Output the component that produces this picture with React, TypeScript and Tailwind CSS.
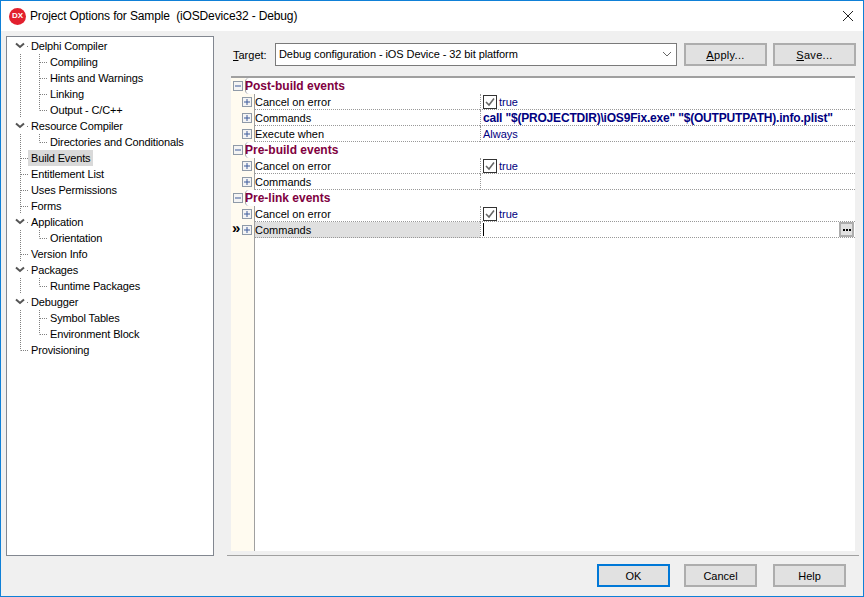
import React from 'react';

const uiFont = "font-['Liberation_Sans',sans-serif] text-[11px] leading-4 text-black";

type TreeItem = {
  label: string;
  level: 0 | 1;
  expanded?: boolean;
  selected?: boolean;
  last?: boolean;
  trunkEnd?: boolean;
};

const treeItems: TreeItem[] = [
  { label: 'Delphi Compiler', level: 0, expanded: true },
  { label: 'Compiling', level: 1 },
  { label: 'Hints and Warnings', level: 1 },
  { label: 'Linking', level: 1 },
  { label: 'Output - C/C++', level: 1, last: true },
  { label: 'Resource Compiler', level: 0, expanded: true },
  { label: 'Directories and Conditionals', level: 1, last: true },
  { label: 'Build Events', level: 0, selected: true },
  { label: 'Entitlement List', level: 0 },
  { label: 'Uses Permissions', level: 0 },
  { label: 'Forms', level: 0 },
  { label: 'Application', level: 0, expanded: true },
  { label: 'Orientation', level: 1, last: true },
  { label: 'Version Info', level: 0 },
  { label: 'Packages', level: 0, expanded: true },
  { label: 'Runtime Packages', level: 1, last: true },
  { label: 'Debugger', level: 0, expanded: true },
  { label: 'Symbol Tables', level: 1 },
  { label: 'Environment Block', level: 1, last: true },
  { label: 'Provisioning', level: 0, trunkEnd: true },
];

const TreeConnector: React.FC<{ item: TreeItem }> = ({ item }) => {
  const dots = { stroke: '#808080', strokeDasharray: '1 1', strokeWidth: 1, fill: 'none' };
  if (item.level === 1) {
    return (
      <svg width="40" height="16" className="shrink-0">
        <path d="M13.5 0V16" {...dots} />
        <path d={item.last ? 'M32.5 0V8.5' : 'M32.5 0V16'} {...dots} />
        <path d="M33 8.5H40" {...dots} />
      </svg>
    );
  }
  if (item.expanded) {
    return (
      <svg width="21" height="16" className="shrink-0">
        <path d="M9 5.5L13 9L17 5.5" stroke="#555" strokeWidth="2" fill="none" />
        <path d="M20 8.5H21" {...dots} />
      </svg>
    );
  }
  return (
    <svg width="21" height="16" className="shrink-0">
      <path d={item.trunkEnd ? 'M13.5 0V8.5' : 'M13.5 0V16'} {...dots} />
      <path d="M14 8.5H21" {...dots} />
    </svg>
  );
};

const Tree: React.FC = () => (
  <div className="w-[208px] shrink-0 border border-[#828790] bg-white pt-[1px] tracking-[-0.14px]">
    {treeItems.map((item) => (
      <div key={item.label} className="flex h-4">
        <TreeConnector item={item} />
        <span className={item.selected ? 'bg-[#d9d9d9] pr-[3px] pl-[3px]' : 'pl-[3px]'}>{item.label}</span>
      </div>
    ))}
  </div>
);

const ExpandBox: React.FC<{ plus?: boolean }> = ({ plus }) => (
  <svg width="10" height="10" className="shrink-0">
    <rect x="0.5" y="0.5" width="9" height="9" fill="#f4f4f4" stroke="#8f9aa8" />
    <path d="M2 5H8" stroke="#3c5a9a" />
    {plus && <path d="M5 2V8" stroke="#3c5a9a" />}
  </svg>
);

const CheckBox: React.FC = () => (
  <svg width="14" height="14" className="shrink-0">
    <rect x="0.5" y="0.5" width="13" height="13" fill="#fff" stroke="#333" />
    <path d="M3 7L6 10L11 3.5" stroke="#666" strokeWidth="1.5" fill="none" />
  </svg>
);

const GroupRow: React.FC<{ label: string }> = ({ label }) => (
  <div className="flex h-4">
    <div className="flex w-[14px] shrink-0 items-center bg-[#fffbf0] pl-[2px]">
      <ExpandBox />
    </div>
    <div className="flex-1 rounded-l-[4px] border-l border-[#a0a0a0] bg-white indent-[-1px] text-[12px] font-bold text-[#800040]">
      {label}
    </div>
  </div>
);

const PropRow: React.FC<{
  name: string;
  selected?: boolean;
  children?: React.ReactNode;
}> = ({ name, selected, children }) => (
  <div className="flex h-4">
    <div className="relative flex w-[23px] shrink-0 items-center justify-end bg-[#fffbf0] pr-[2px]">
      {selected && (
        <span className="absolute left-[1px] top-[-2px] text-[15px] font-bold leading-4 text-black">»</span>
      )}
      <ExpandBox plus />
    </div>
    <div className={`w-[226px] shrink-0 border-l border-l-[#a0a0a0] ${selected ? 'bg-[#e0e0e0]' : ''}`}>
      <div className="h-4 border-b border-dotted border-[#999999] leading-4">{name}</div>
    </div>
    <div className="relative flex h-4 flex-1 items-center gap-[2px] border-b border-l border-dotted border-[#999999] pl-[2px] text-[#000080]">
      {children}
    </div>
  </div>
);

const PushButton: React.FC<{ className?: string; children: React.ReactNode }> = ({ className, children }) => (
  <button className={`flex h-[23px] items-center justify-center border-2 bg-[#e1e1e1] ${className ?? 'border-[#adadad]'}`}>
    <span>{children}</span>
  </button>
);

const PropertyGrid: React.FC = () => (
  <div className="mx-[4px] mt-[10px] flex flex-1 flex-col border-t-2 border-[#a0a0a0] bg-white">
    <GroupRow label="Post-build events" />
    <PropRow name="Cancel on error">
      <CheckBox />
      <span>true</span>
    </PropRow>
    <PropRow name="Commands">
      <span className="whitespace-nowrap text-[12px] font-bold tracking-[-0.19px]">call "$(PROJECTDIR)\iOS9Fix.exe" "$(OUTPUTPATH).info.plist"</span>
    </PropRow>
    <PropRow name="Execute when">
      <span>Always</span>
    </PropRow>
    <GroupRow label="Pre-build events" />
    <PropRow name="Cancel on error">
      <CheckBox />
      <span>true</span>
    </PropRow>
    <PropRow name="Commands" />
    <GroupRow label="Pre-link events" />
    <PropRow name="Cancel on error">
      <CheckBox />
      <span>true</span>
    </PropRow>
    <PropRow name="Commands" selected>
      <div className="h-[13px] w-[1px] bg-black" />
      <div className="absolute right-[1px] top-0 flex h-[15px] w-[15px] items-center justify-center gap-[1px] border-2 border-[#adadad] bg-[#e1e1e1]">
        <i className="h-[2px] w-[2px] bg-black" />
        <i className="h-[2px] w-[2px] bg-black" />
        <i className="h-[2px] w-[2px] bg-black" />
      </div>
    </PropRow>
    {/* empty space under the rows */}
    <div className="flex flex-1">
      <div className="w-[23px] shrink-0 bg-[#fffbf0]" />
      <div className="border-l border-[#a0a0a0]" />
    </div>
  </div>
);

export default function App() {
  return (
    <div className={`flex h-[597px] w-[864px] flex-col overflow-hidden border border-[#0f80d7] bg-[#f0f0f0] ${uiFont}`}>
      {/* Title bar */}
      <div className="flex h-[30px] shrink-0 items-center bg-white pr-[9px] pl-[8px]">
        <div className="flex h-[17px] w-[17px] items-center justify-center rounded-full bg-[#e2202e] text-[8px] font-bold text-white">
          DX
        </div>
        <span className="ml-[4px] whitespace-pre text-[12px] tracking-[-0.14px]">Project Options for Sample  (iOSDevice32 - Debug)</span>
        <svg width="12" height="12" className="ml-auto">
          <path d="M1 1L11 11M11 1L1 11" stroke="#222" strokeWidth="1" />
        </svg>
      </div>

      {/* Body */}
      <div className="flex h-[525px] shrink-0 pt-[5px] pl-[5px]">
        <Tree />
        <div className="ml-[13px] mr-[4px] flex flex-1 flex-col border-b border-[#a0a0a0]">
          <div className="mt-[7px] flex h-[23px] shrink-0 items-center pr-[2px] pl-[6px]">
            <span className="w-[42px]">
              <u>T</u>arget:
            </span>
            <div className="flex h-[23px] w-[402px] items-center border border-[#7a7a7a] bg-white pb-[1px] pl-[3px] tracking-[-0.08px]">
              <span>Debug configuration - iOS Device - 32 bit platform</span>
              <svg width="10" height="6" className="mr-[4px] ml-auto">
                <path d="M1 1L5 5L9 1" stroke="#666" fill="none" />
              </svg>
            </div>
            <PushButton className="ml-[7px] w-[83px] border-[#adadad] tracking-[0.3px]">
              <u>A</u>pply...
            </PushButton>
            <PushButton className="ml-[6px] w-[83px] border-[#adadad] tracking-[0.3px]">
              <u>S</u>ave...
            </PushButton>
          </div>
          <PropertyGrid />
          <div className="h-[4px] shrink-0" />
        </div>
      </div>

      {/* Footer */}
      <div className="flex flex-1 items-start justify-end pt-[8px] pr-[17px]">
        <PushButton className="w-[73px] border-[#0078d7]">OK</PushButton>
        <PushButton className="ml-[14px] w-[73px] border-[#adadad]">Cancel</PushButton>
        <PushButton className="ml-[16px] w-[73px] border-[#adadad]">Help</PushButton>
      </div>
    </div>
  );
}
